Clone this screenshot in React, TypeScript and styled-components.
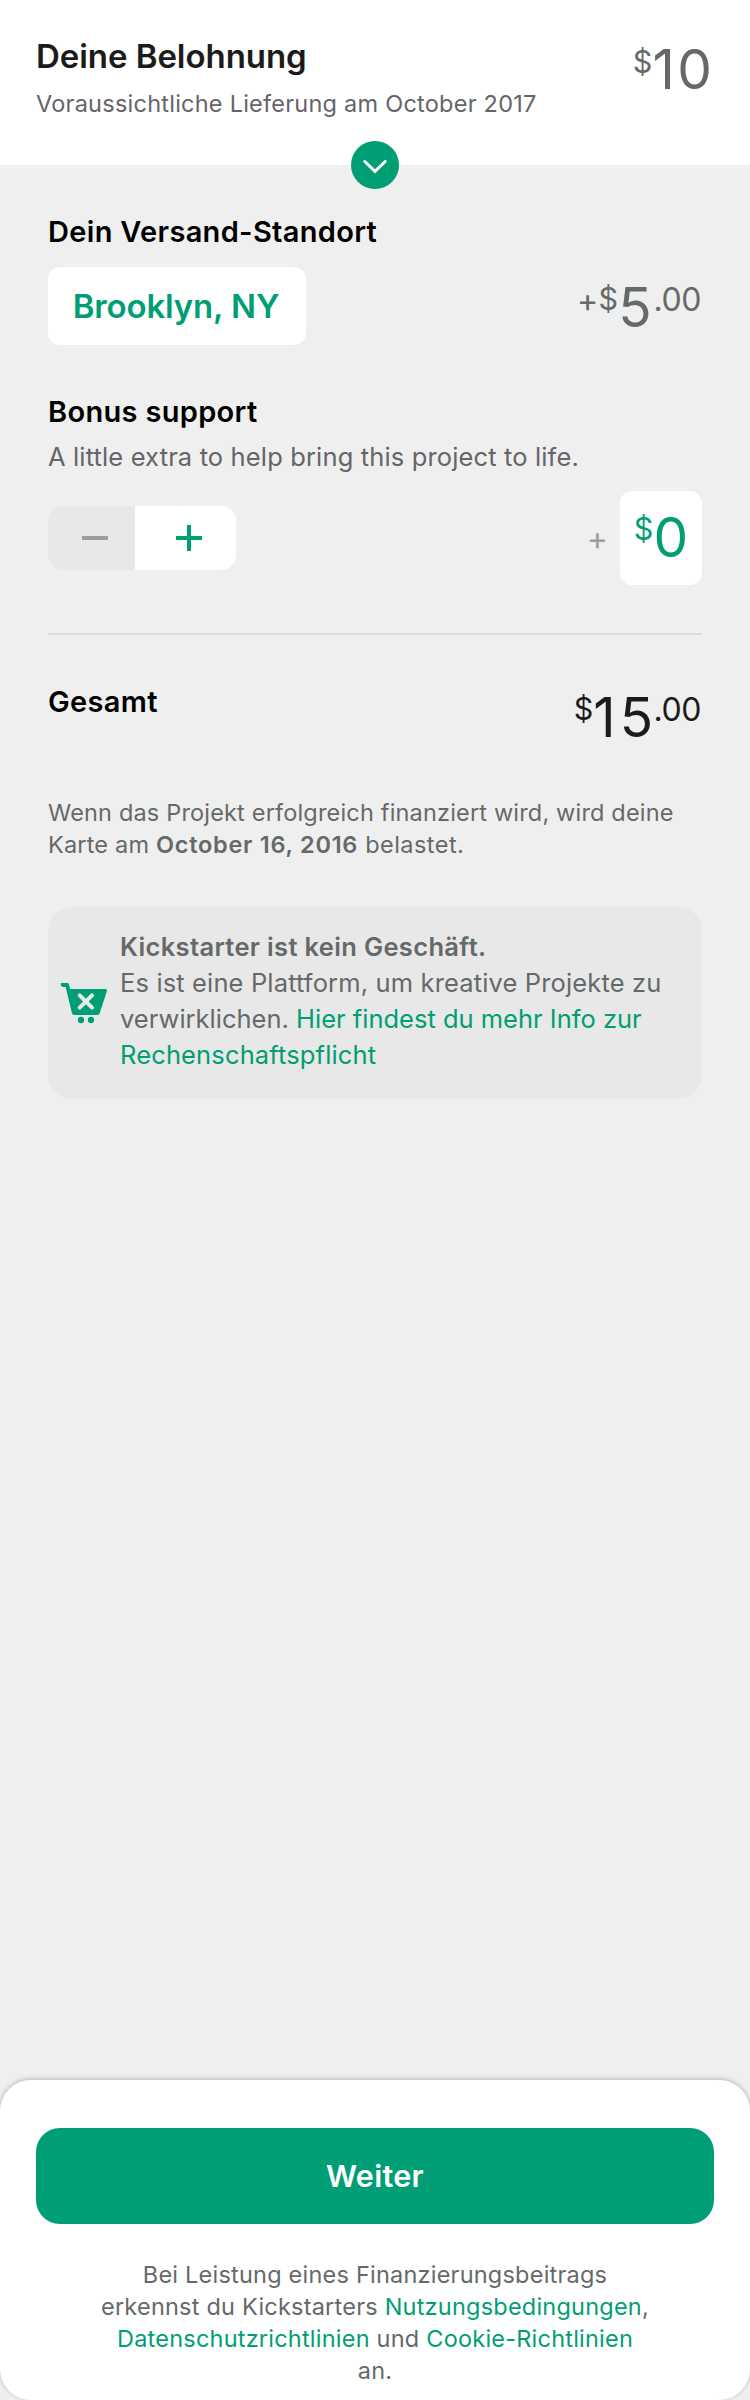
import React from "react";
import styled, { createGlobalStyle, ThemeProvider } from "styled-components";

const theme = {
  green: "#009e74",
  ink: "#1b1b1c",
  slate: "#656969",
  muted: "#656469",
  faint: "#9b9e9e",
  page: "#efefef",
  panel: "#e8e8e8",
  line: "#dcdcdc",
};

const GlobalStyle = createGlobalStyle`
  * { box-sizing: border-box; }
  body {
    margin: 0;
    background: ${theme.page};
    font-family: Inter, "Liberation Sans", sans-serif;
  }
  h1, h2, p { margin: 0; }
  button { border: 0; padding: 0; font: inherit; }
`;

const Page = styled.div`
  display: flex;
  flex-direction: column;
  width: 750px;
  height: 2400px;
  background: ${({ theme }) => theme.page};
`;

const Header = styled.header`
  position: relative;
  display: flex;
  justify-content: space-between;
  align-items: flex-start;
  height: 165px;
  padding: 36px 38px 0 36px;
  background: #fff;
`;

const Title = styled.h1`
  font-size: 33px;
  font-weight: 600;
  line-height: 40px;
  letter-spacing: -0.05px;
  color: ${({ theme }) => theme.ink};
`;

const Delivery = styled.p`
  margin-top: 11.5px;
  font-size: 23.5px;
  line-height: 32px;
  letter-spacing: 0.24px;
  color: ${({ theme }) => theme.muted};
  white-space: nowrap;
`;

const ExpandBadge = styled.button`
  position: absolute;
  left: calc(50% - 24px);
  bottom: -24px;
  width: 48px;
  height: 48px;
  border-radius: 50%;
  background: ${({ theme }) => theme.green};

  svg { display: block; }
`;

type Tone = "slate" | "ink" | "green";

const Price = styled.div<{ $tone: Tone; $offset?: number }>`
  display: flex;
  align-items: flex-start;
  margin-top: ${({ $offset = 0 }) => $offset}px;
  color: ${({ theme, $tone }) => theme[$tone]};
`;

const Sign = styled.span`
  margin: 5px 0.5px 0 0;
  font-size: 32px;
  line-height: 32px;
`;

const Currency = styled.span`
  margin-top: 3.7px;
  font-size: 30.5px;
  line-height: 32px;
`;

const Amount = styled.span<{ $spacing?: number }>`
  display: block;
  font-size: 55px;
  line-height: 54px;

  &::first-letter { letter-spacing: ${({ $spacing = 0 }) => $spacing}px; }
`;

const Cents = styled.span<{ $gap?: number }>`
  margin: 4px 1px 0 ${({ $gap = 0 }) => $gap}px;
  font-size: 32px;
  line-height: 32px;
  letter-spacing: -0.45px;
`;

const Main = styled.main`
  flex: 1;
  padding: 49px 48px 0;
`;

const Heading = styled.h2`
  font-size: 29px;
  font-weight: 600;
  line-height: 35px;
  letter-spacing: 0.32px;
  color: #000;
`;

const Row = styled.div<{ $align?: string }>`
  display: flex;
  justify-content: space-between;
  align-items: ${({ $align = "flex-start" }) => $align};
`;

const Shipping = styled.section`
  ${Row} { margin-top: 18px; }
`;

const LocationButton = styled.button`
  width: 258px;
  height: 78px;
  padding-right: 2px;
  border-radius: 12px;
  background: #fff;
  font-size: 33px;
  font-weight: 600;
  letter-spacing: -0.15px;
  color: ${({ theme }) => theme.green};
`;

const Bonus = styled.section`
  margin-top: 49px;
  padding-bottom: 48px;
  border-bottom: 2px solid ${({ theme }) => theme.line};

  ${Row} { margin-top: 18px; }
`;

const Hint = styled.p`
  margin-top: 12px;
  font-size: 25.5px;
  line-height: 32px;
  letter-spacing: 0.14px;
  color: ${({ theme }) => theme.muted};
`;

const Stepper = styled.div`
  display: flex;
  width: 188px;
  height: 64px;
  border-radius: 15px;
  overflow: hidden;
  background: #fff;
`;

const StepButton = styled.button<{ $kind: "minus" | "plus" }>`
  width: ${({ $kind }) => ($kind === "minus" ? 87 : 101)}px;
  padding-left: 7px;
  background: ${({ theme, $kind }) => ($kind === "minus" ? theme.panel : "#fff")};
  color: ${({ theme, $kind }) => ($kind === "minus" ? theme.faint : theme.green)};

  svg { display: block; margin: 0 auto; }
`;

const BonusAmount = styled.div`
  display: flex;
  align-items: center;
  gap: 12px;
`;

const BonusSign = styled.span`
  padding-top: 1px;
  font-size: 32px;
  line-height: 32px;
  color: ${({ theme }) => theme.faint};
`;

const AmountField = styled.div`
  display: flex;
  justify-content: center;
  width: 82px;
  height: 94px;
  padding-top: 18.6px;
  border-radius: 12px;
  background: #fff;
`;

const Total = styled.section`
  height: 109px;
  padding-top: 49px;
`;

const ChargeNote = styled.p`
  margin-top: 52.5px;
  font-size: 23.5px;
  line-height: 32px;
  letter-spacing: 0.175px;
  color: ${({ theme }) => theme.slate};

  strong { font-weight: 600; letter-spacing: 0.75px; }
  span { letter-spacing: 0.45px; }
`;

const Notice = styled.aside`
  display: flex;
  align-items: center;
  height: 192px;
  margin-top: 46.5px;
  padding-left: 12px;
  border-radius: 24px;
  background: ${({ theme }) => theme.panel};
`;

const NoticeText = styled.div`
  height: 144px;
  margin: -4px 0 0 10px;
  font-size: 25.5px;
  line-height: 36px;
  letter-spacing: 0.14px;
  color: ${({ theme }) => theme.slate};

  strong { font-weight: 600; letter-spacing: 0.343px; }
`;

const TightLine = styled.span`
  letter-spacing: 0;
`;

const Link = styled.span`
  color: ${({ theme }) => theme.green};
`;

const Footer = styled.footer`
  height: 320px;
  padding: 48px 36px 0;
  border-radius: 31px;
  background: #fff;
  box-shadow: 0 -1px 5px rgba(0, 0, 0, 0.24);
`;

const ContinueButton = styled.button`
  display: block;
  width: 100%;
  height: 96px;
  padding-bottom: 2px;
  border-radius: 24px;
  background: ${({ theme }) => theme.green};
  font-size: 30.5px;
  font-weight: 600;
  letter-spacing: 0.3px;
  color: #fff;
`;

const Terms = styled.p`
  margin-top: 34.5px;
  font-size: 23.5px;
  line-height: 32px;
  letter-spacing: 0.22px;
  text-align: center;
  color: ${({ theme }) => theme.slate};
`;

const ChevronIcon = () => (
  <svg width="48" height="48" viewBox="0 0 48 48" fill="none" stroke="#fff" strokeWidth="3" strokeLinecap="round" strokeLinejoin="miter">
    <path d="M13.8 20.5 24 30.4 34.2 20.5" />
  </svg>
);

const MinusIcon = () => (
  <svg width="26" height="26" viewBox="0 0 26 26" fill="currentColor">
    <path d="M0 11h26v4H0z" />
  </svg>
);

const PlusIcon = () => (
  <svg width="26" height="26" viewBox="0 0 26 26" fill="currentColor">
    <path d="M0 11h11V0h4v11h11v4H15v11h-4V15H0z" />
  </svg>
);

const CartIcon = () => (
  <svg width="50" height="42" viewBox="180 276 150 126">
    <path
      fill={theme.green}
      d="M185 279H202Q206 279 207 283L210 297H317Q322 297 321 302L299 370Q297 375 292 375H222Q217 375 216 370L197 291H188Q182 290 182 283Q182 279 185 279Z"
    />
    <path d="M239 316 276 353M276 316 239 353" fill="none" stroke={theme.panel} strokeWidth="12" strokeLinecap="round" />
    <circle cx="243" cy="390" r="9.5" fill={theme.green} />
    <circle cx="273" cy="390" r="9.5" fill={theme.green} />
  </svg>
);

export default function App() {
  return (
    <ThemeProvider theme={theme}>
      <GlobalStyle />
      <Page>
        <Header>
          <div>
            <Title>Deine Belohnung</Title>
            <Delivery>Voraussichtliche Lieferung am October 2017</Delivery>
          </div>
          <Price $tone="slate" $offset={6}>
            <Currency>$</Currency>
            <Amount $spacing={2.5}>10</Amount>
          </Price>
          <ExpandBadge aria-label="Details">
            <ChevronIcon />
          </ExpandBadge>
        </Header>

        <Main>
          <Shipping>
            <Heading>Dein Versand-Standort</Heading>
            <Row>
              <LocationButton>Brooklyn, NY</LocationButton>
              <Price $tone="slate" $offset={12.8}>
                <Sign>+</Sign>
                <Currency>$</Currency>
                <Amount>5</Amount>
                <Cents $gap={2}>.00</Cents>
              </Price>
            </Row>
          </Shipping>

          <Bonus>
            <Heading>Bonus support</Heading>
            <Hint>A little extra to help bring this project to life.</Hint>
            <Row $align="center">
              <Stepper>
                <StepButton $kind="minus" aria-label="Weniger">
                  <MinusIcon />
                </StepButton>
                <StepButton $kind="plus" aria-label="Mehr">
                  <PlusIcon />
                </StepButton>
              </Stepper>
              <BonusAmount>
                <BonusSign>+</BonusSign>
                <AmountField>
                  <Price $tone="green">
                    <Currency>$</Currency>
                    <Amount>0</Amount>
                  </Price>
                </AmountField>
              </BonusAmount>
            </Row>
          </Bonus>

          <Total>
            <Row>
              <Heading>Gesamt</Heading>
              <Price $tone="ink" $offset={5.8}>
                <Currency>$</Currency>
                <Amount $spacing={4}>15</Amount>
                <Cents $gap={0.5}>.00</Cents>
              </Price>
            </Row>
          </Total>

          <ChargeNote>
            Wenn das Projekt erfolgreich finanziert wird, wird deine
            <br />
            Karte am <strong>October 16, 2016</strong>
            <span> belastet.</span>
          </ChargeNote>

          <Notice>
            <CartIcon />
            <NoticeText>
              <strong>Kickstarter ist kein Geschäft.</strong>
              <br />
              Es ist eine Plattform, um kreative Projekte zu
              <br />
              <TightLine>
                verwirklichen. <Link>Hier findest du mehr Info zur</Link>
              </TightLine>
              <br />
              <Link>Rechenschaftspflicht</Link>
            </NoticeText>
          </Notice>
        </Main>

        <Footer>
          <ContinueButton>Weiter</ContinueButton>
          <Terms>
            Bei Leistung eines Finanzierungsbeitrags
            <br />
            erkennst du Kickstarters <Link>Nutzungsbedingungen</Link>,
            <br />
            <Link>Datenschutzrichtlinien</Link> und <Link>Cookie-Richtlinien</Link>
            <br />
            an.
          </Terms>
        </Footer>
      </Page>
    </ThemeProvider>
  );
}
